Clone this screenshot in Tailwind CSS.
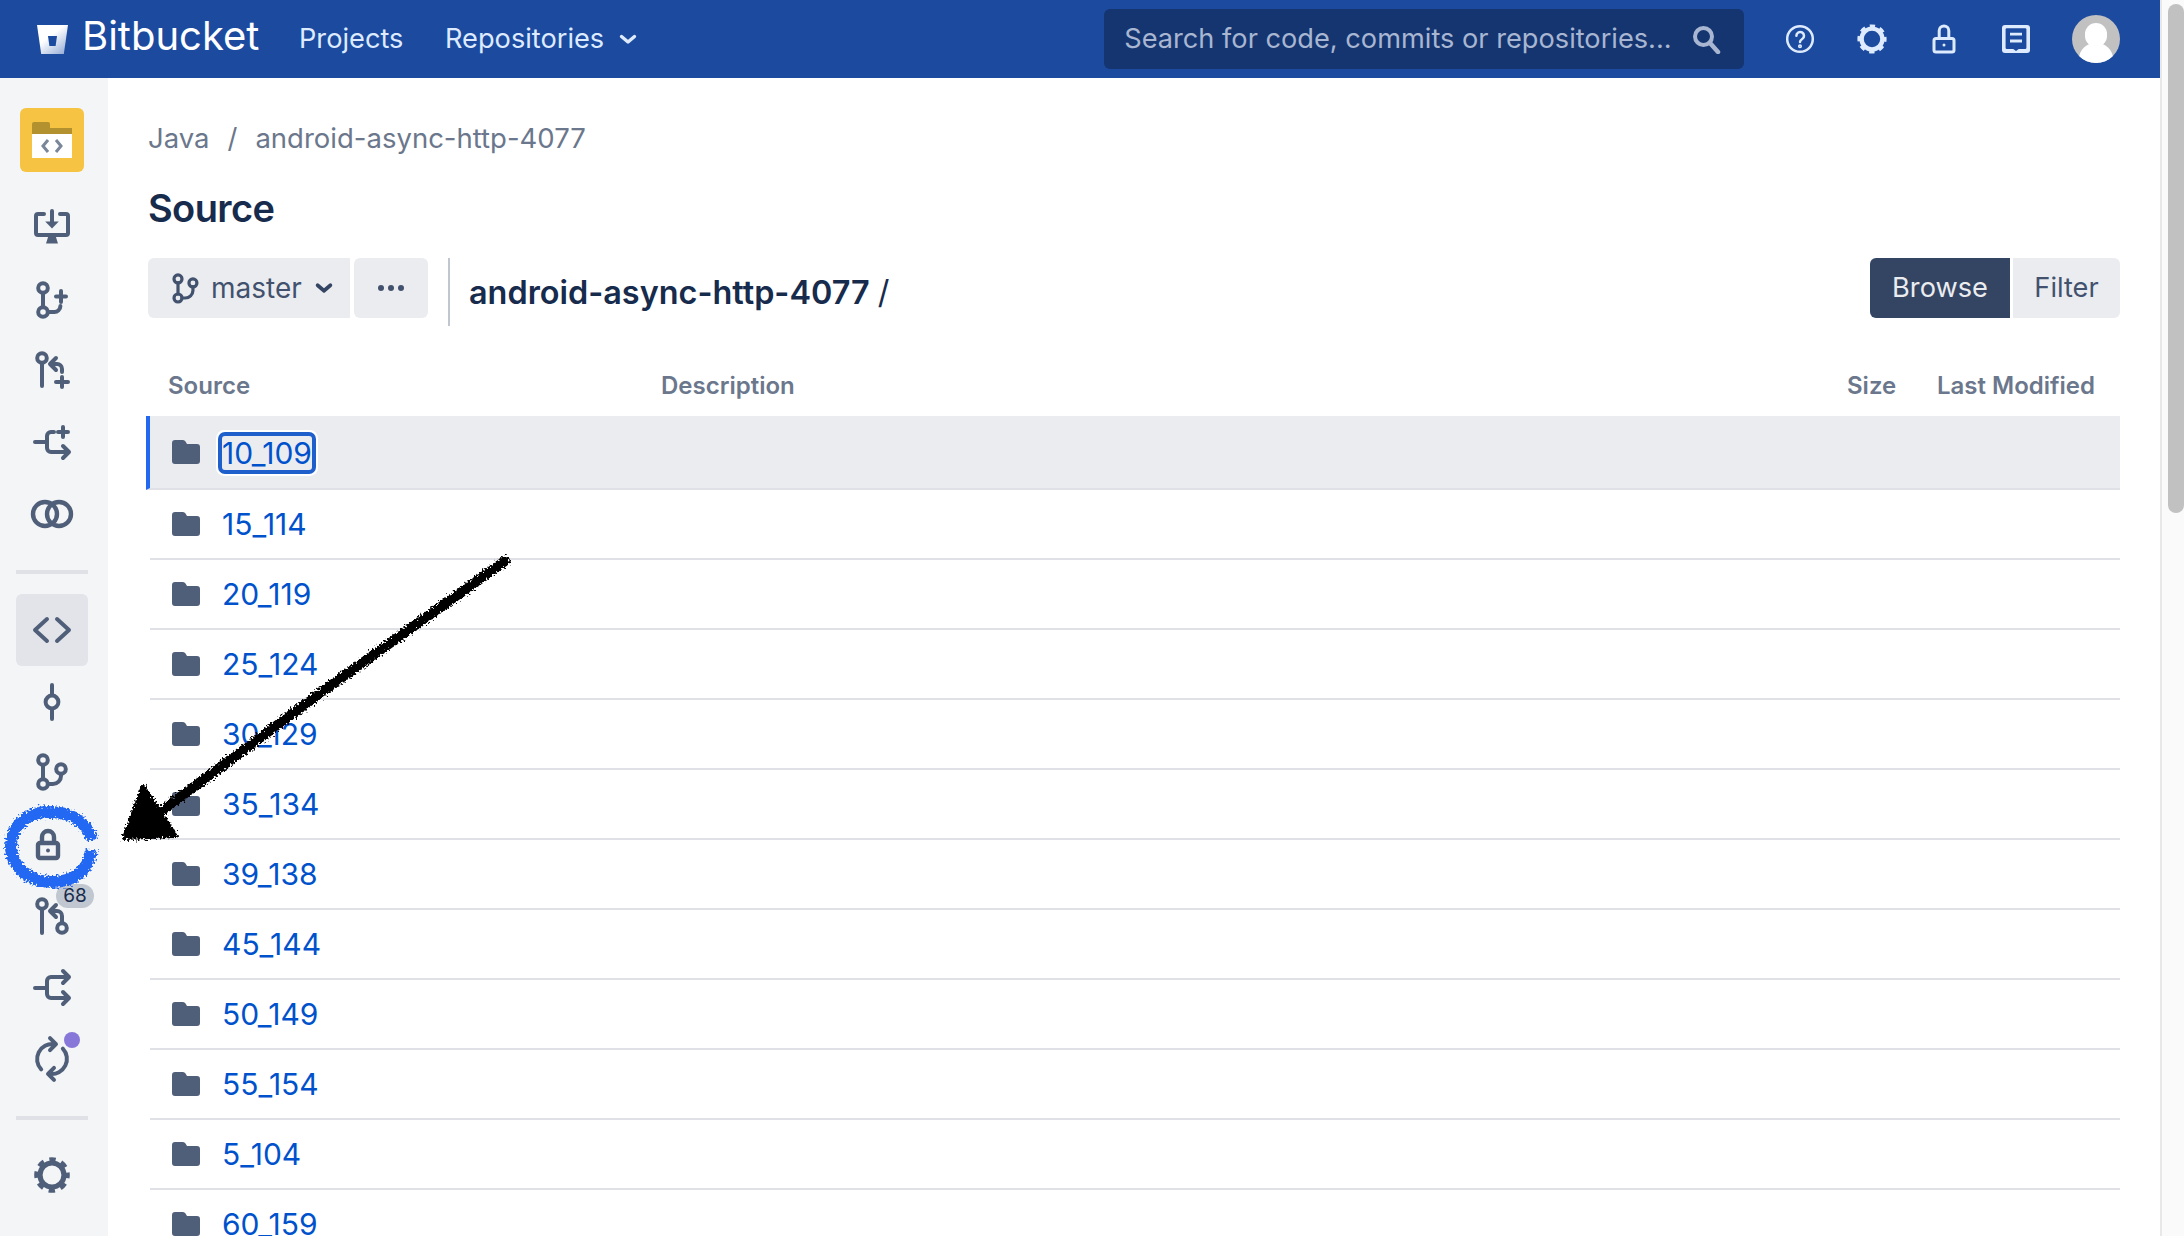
<!DOCTYPE html>
<html lang="en">
<head>
  <meta charset="UTF-8">
  <title>Source - android-async-http-4077</title>
  <script src="https://cdn.jsdelivr.net/npm/@tailwindcss/browser@4"></script>
</head>
<body class="bg-white overflow-hidden [font-family:Inter,sans-serif]">

  <svg class="hidden">
    <symbol id="folder" viewBox="0 0 28 24">
      <path fill="#505f79" d="M3 0h8a3 3 0 0 1 2.5 1.5L15 4h10a3 3 0 0 1 3 3v14a3 3 0 0 1-3 3H3a3 3 0 0 1-3-3V3a3 3 0 0 1 3-3z"/>
    </symbol>
  </svg>

  <div class="relative flex w-[2184px] h-[1236px] overflow-hidden">
    <div class="w-[2160px] flex flex-col">

      <!-- top nav -->
      <header class="h-[78px] shrink-0 bg-[#1b4a9f] flex items-center text-[#deebff] text-[27.2px]">
        <svg class="ml-[37px] w-[31px] h-[29px]" viewBox="0 0 31 29">
          <defs>
            <linearGradient id="bucket" x1="0.15" y1="0.1" x2="0.85" y2="0.95">
              <stop offset="0.35" stop-color="#ffffff"/>
              <stop offset="1" stop-color="#9fb4da"/>
            </linearGradient>
          </defs>
          <path fill="url(#bucket)" d="M0 0h31l-4.2 29H4.2z"/>
          <path fill="#1b4a9f" d="M11 11h9l-1.4 10h-6.2z"/>
        </svg>
        <span class="ml-[14px] w-[217px] text-[40px] leading-none text-white -mt-[7px]">Bitbucket</span>
        <span class="w-[146px]">Projects</span>
        <span>Repositories</span>
        <svg class="ml-[12px] w-[24px] h-[24px]" viewBox="0 0 24 24" fill="none" stroke="#deebff" stroke-width="3.4" stroke-linecap="round" stroke-linejoin="round"><path d="M5.5 9.5 12 15l6.5-5.5"/></svg>

        <div class="ml-[464px] w-[640px] h-[60px] rounded-[6px] bg-[#153570] flex items-center pl-[20px] text-[#a8b6d2]">
          <span class="w-[567px] whitespace-nowrap">Search for code, commits or repositories...</span>
          <svg class="w-[30px] h-[30px]" viewBox="0 0 30 30" fill="none" stroke="#a8b6d2"><circle cx="12.5" cy="12.5" r="8.5" stroke-width="4"/><path d="m19 19 8 9" stroke-width="4.5" stroke-linecap="round"/></svg>
        </div>

        <svg class="ml-[32px] w-[48px] h-[48px]" viewBox="0 0 24 24" fill="none" stroke="#deebff" stroke-width="1.25" stroke-linecap="round"><circle cx="12" cy="12" r="6.4"/><path d="M10.2 10.4a1.9 1.9 0 1 1 2.9 1.6c-.8.5-1.1.9-1.1 1.5"/><circle cx="12" cy="15.6" r=".4"/></svg>
        <svg class="ml-[24px] w-[48px] h-[48px]" viewBox="0 0 24 24" fill="none" stroke="#deebff"><circle cx="12" cy="12" r="5.2" stroke-width="2.2"/><circle cx="12" cy="12" r="6.4" stroke-width="1.8" stroke-dasharray="2.6 2.43" stroke-dashoffset="1.3"/></svg>
        <svg class="ml-[24px] w-[48px] h-[48px]" viewBox="0 0 24 24" fill="none" stroke="#deebff" stroke-width="1.5"><rect x="7" y="11.7" width="10" height="6.8" rx="1"/><path d="M9.6 11.5V7.9a2.4 2.4 0 0 1 4.8 0v3.6"/><circle cx="12" cy="15" r=".75" fill="#deebff" stroke="none"/></svg>
        <svg class="ml-[24px] w-[48px] h-[48px]" viewBox="0 0 24 24"><rect x="5" y="5" width="14" height="14" rx="1.5" fill="#deebff"/><rect x="6.8" y="6.6" width="10.4" height="10.4" rx=".6" fill="#1b4a9f"/><path d="M9 9.6h6M9 13h6" stroke="#deebff" stroke-width="1.4"/><path d="M10.6 17h2.8L12 18z" fill="#1b4a9f"/></svg>

        <div class="relative ml-[32px] w-[48px] h-[48px] rounded-full bg-[#c1c1c1] overflow-hidden">
          <div class="absolute left-[13px] top-[8px] w-[22px] h-[24px] rounded-full bg-white"></div>
          <div class="absolute left-[7px] top-[28px] w-[34px] h-[30px] rounded-t-[16px] bg-white"></div>
        </div>
      </header>

      <div class="flex flex-1 min-h-0">
        <!-- project / repo sidebar -->
        <aside class="w-[108px] shrink-0 bg-[#f4f5f7] flex flex-col items-center pt-[30px] pr-[4px]">
          <div class="w-[64px] h-[64px] rounded-[6px] bg-[#f6c343] flex items-center justify-center">
            <svg class="w-[40px] h-[36px]" viewBox="0 0 40 36">
              <path fill="#b3912f" d="M0 2a2 2 0 0 1 2-2h14a2 2 0 0 1 2 2v4h22v6H0z"/>
              <rect y="12" width="40" height="24" fill="#fff"/>
              <path d="M16 18l-5 6 5 6M24 18l5 6-5 6" fill="none" stroke="#7a869a" stroke-width="3"/>
            </svg>
          </div>

          <div class="mt-[20px] h-[72px] flex items-center justify-center">
            <svg class="w-[48px] h-[48px]" viewBox="0 0 24 24" fill="none" stroke="#505f79" stroke-width="2" stroke-linecap="round" stroke-linejoin="round"><path d="M8 5H5a1 1 0 0 0-1 1v8.5a1 1 0 0 0 1 1h14a1 1 0 0 0 1-1V6a1 1 0 0 0-1-1h-3"/><path d="M12 3.5V9"/><path d="M8.6 8.8h6.800L12 12.2z" fill="#505f79" stroke="none"/><path d="M10.2 16h3.6l1.2 3.7H9z" fill="#505f79" stroke="none"/></svg>
          </div>
          <div class="h-[72px] flex items-center justify-center">
            <svg class="w-[48px] h-[48px]" viewBox="0 0 24 24" fill="none" stroke="#505f79" stroke-width="2" stroke-linecap="round"><circle cx="7.5" cy="6" r="2.4"/><circle cx="7.5" cy="18" r="2.4"/><path d="M7.5 8.5v7M10 18h3a3 3 0 0 0 3.2-3M16.5 7.5V13M14 10.200h5"/></svg>
          </div>
          <div class="h-[72px] flex items-center justify-center">
            <svg class="w-[48px] h-[48px]" viewBox="0 0 24 24" fill="none" stroke="#505f79" stroke-width="2" stroke-linecap="round" stroke-linejoin="round"><circle cx="7" cy="5" r="2.4"/><path d="M7 7.500V19M17 12v-1.500a2.500 2.500 0 0 0-2.500-2.500H12M14 5 11 8l3 3M17 14.500v5M14 17h6"/></svg>
          </div>
          <div class="h-[72px] flex items-center justify-center">
            <svg class="w-[48px] h-[48px] -mt-[4px]" viewBox="0 0 24 24" fill="none" stroke="#505f79" stroke-width="2" stroke-linecap="round" stroke-linejoin="round"><path d="M3.500 12h6M13 7h-1.500a2 2 0 0 0-2 2v6a2 2 0 0 0 2 2H20M17.500 14l3 3-3 3M17.500 4.500v5M15 7h5"/></svg>
          </div>
          <div class="h-[72px] flex items-center justify-center">
            <svg class="w-[48px] h-[48px]" viewBox="0 0 24 24" fill="none" stroke="#505f79" stroke-width="2.2"><circle cx="8.5" cy="11" r="6"/><circle cx="15.5" cy="11" r="6"/></svg>
          </div>

          <div class="mt-[18px] w-[72px] h-[4px] bg-[#dfe1e6]"></div>

          <div class="mt-[20px] w-[72px] h-[72px] rounded-[6px] bg-[#e2e4e9] flex items-center justify-center">
            <svg class="w-[48px] h-[48px]" viewBox="0 0 24 24" fill="none" stroke="#505f79" stroke-width="2" stroke-linecap="round" stroke-linejoin="round"><path d="M9.500 6.500 3.500 12l6 5.500M14.500 6.500l6 5.500-6 5.500"/></svg>
          </div>
          <div class="h-[72px] flex items-center justify-center">
            <svg class="w-[48px] h-[48px]" viewBox="0 0 24 24" fill="none" stroke="#505f79" stroke-width="2" stroke-linecap="round"><circle cx="12" cy="12" r="3.2"/><path d="M12 3.500v5M12 15.500v5"/></svg>
          </div>
          <div class="h-[72px] flex items-center justify-center">
            <svg class="w-[48px] h-[48px] -mt-[4px]" viewBox="0 0 24 24" fill="none" stroke="#505f79" stroke-width="2" stroke-linecap="round"><circle cx="7.5" cy="6" r="2.4"/><circle cx="7.5" cy="18" r="2.4"/><circle cx="16.5" cy="10.5" r="2.4"/><path d="M7.500 8.500v7M10 18h2.500a4 4 0 0 0 4-4v-1"/></svg>
          </div>
          <div class="h-[72px] w-full flex items-center justify-center">
            <svg class="w-[48px] h-[48px] -ml-[8px] -mt-[4px]" viewBox="0 0 24 24" fill="none" stroke="#505f79" stroke-width="2.2" stroke-linejoin="round"><rect x="7" y="11.5" width="10" height="7.5" rx="1"/><path d="M9 11V8.500a3 3 0 0 1 6 0V11"/><circle cx="12" cy="15.200" r="1" fill="#505f79" stroke="none"/></svg>
          </div>
          <div class="relative h-[72px] w-full flex items-center justify-center">
            <svg class="w-[48px] h-[48px] -mt-[4px]" viewBox="0 0 24 24" fill="none" stroke="#505f79" stroke-width="2" stroke-linecap="round" stroke-linejoin="round"><circle cx="7" cy="6" r="2.4"/><circle cx="17" cy="18" r="2.4"/><path d="M7 8.500v12M17 15.500V12a2.500 2.500 0 0 0-2.500-2.500H12M14 6.500l-3 3 3 3"/></svg>
            <span class="absolute left-[56px] top-[2px] w-[38px] h-[24px] rounded-full bg-[#c1c7d0] text-[#172b4d] text-[19px] leading-[24px] text-center">68</span>
          </div>
          <div class="h-[72px] flex items-center justify-center">
            <svg class="w-[48px] h-[48px] -mt-[4px]" viewBox="0 0 24 24" fill="none" stroke="#505f79" stroke-width="2" stroke-linecap="round" stroke-linejoin="round"><path d="M3.500 12h6M20 6.500h-8.500a2 2 0 0 0-2 2V15a2 2 0 0 0 2 2H20M17.500 3.500l3 3-3 3M17.500 14l3 3-3 3"/></svg>
          </div>
          <div class="relative h-[72px] w-full flex items-center justify-center">
            <svg class="w-[48px] h-[48px] -mt-[6px]" viewBox="0 0 24 24" fill="none" stroke="#505f79" stroke-width="2" stroke-linecap="round" stroke-linejoin="round"><path d="M13 4.600A7.500 7.500 0 0 0 6.600 17.200M11 1.600l3 3-3 3M11 19.400A7.500 7.500 0 0 0 17.400 6.800M13 16.400l-3 3 3 3"/></svg>
            <span class="absolute left-[64px] top-[6px] w-[16px] h-[16px] rounded-full bg-[#8777d9]"></span>
          </div>

          <div class="mt-[18px] w-[72px] h-[4px] bg-[#dfe1e6]"></div>

          <div class="mt-[20px] h-[72px] flex items-center justify-center">
            <svg class="w-[48px] h-[48px] -mt-[2px]" viewBox="0 0 24 24" fill="none" stroke="#505f79"><circle cx="12" cy="12" r="6" stroke-width="2.6"/><circle cx="12" cy="12" r="7.8" stroke-width="2.2" stroke-dasharray="3.2 2.93" stroke-dashoffset="1.6"/></svg>
          </div>
        </aside>

        <!-- source browser -->
        <main class="flex-1 min-w-0 pl-[40px] pr-[40px]">
          <nav class="mt-[41px] h-[40px] flex items-center text-[27.5px] text-[#6b778c]">
            <span>Java</span>
            <span class="ml-[18px]">/</span>
            <span class="ml-[18px]">android-async-http-4077</span>
          </nav>
          <h1 class="mt-[25px] h-[48px] flex items-center text-[38px] tracking-[-0.6px] font-semibold text-[#172b4d]">Source</h1>

          <div class="mt-[26px] flex items-start">
            <div class="w-[202px] h-[60px] rounded-l-[6px] bg-[#ebecf0] flex items-center pl-[22px] text-[28px] text-[#42526e]">
              <svg class="w-[32px] h-[32px] mr-[9px]" viewBox="0 0 24 24" fill="none" stroke="#42526e" stroke-width="2.4" stroke-linecap="round"><circle cx="6" cy="5.2" r="3"/><circle cx="6" cy="19.500" r="3"/><circle cx="17.200" cy="8.200" r="3"/><path d="M6 8.200v8.300M9 19.500h2.500a5.700 5.700 0 0 0 5.700-5.500v-2.800"/></svg>
              <span>master</span>
              <svg class="ml-[11px] w-[22px] h-[22px]" viewBox="0 0 24 24" fill="none" stroke="#344563" stroke-width="4" stroke-linecap="round" stroke-linejoin="round"><path d="M5 9l7 6 7-6"/></svg>
            </div>
            <div class="ml-[4px] w-[74px] h-[60px] rounded-[6px] bg-[#ebecf0] flex items-center justify-center gap-[4px]">
              <span class="w-[6px] h-[6px] rounded-full bg-[#42526e]"></span>
              <span class="w-[6px] h-[6px] rounded-full bg-[#42526e]"></span>
              <span class="w-[6px] h-[6px] rounded-full bg-[#42526e]"></span>
            </div>
            <div class="ml-[20px] w-[2px] h-[68px] bg-[#c1c7d0]"></div>
            <div class="ml-[19px] h-[70px] flex items-center text-[32.4px] text-[#172b4d] whitespace-nowrap">
              <span class="font-semibold">android-async-http-4077</span>
              <span class="ml-[8px]">/</span>
            </div>
            <div class="ml-auto flex h-[60px] text-[27.2px]">
              <span class="w-[140px] pt-[1px] rounded-l-[6px] bg-[#344563] text-[#ebecf0] flex items-center justify-center">Browse</span>
              <span class="ml-[3px] w-[107px] pt-[1px] rounded-r-[6px] bg-[#ebecf0] text-[#42526e] flex items-center justify-center">Filter</span>
            </div>
          </div>

          <div class="mt-[41px] h-[34px] ml-[20px] flex items-center text-[24px] font-semibold text-[#6b778c]">
            <span class="w-[493px]">Source</span>
            <span class="w-[1186px]">Description</span>
            <span class="w-[90px]">Size</span>
            <span>Last Modified</span>
          </div>

          <div class="mt-[13px] ml-[2px] text-[30px] text-[#0052cc]">
            <div class="-ml-[4px] h-[74px] pl-[22px] bg-[#ebecf0] border-l-4 border-l-[#2468f2] border-b-2 border-b-[#dfe1e6] flex items-center gap-[22px]">
              <svg class="w-[28px] h-[24px]"><use href="#folder"/></svg>
              <span class="mt-[1px] h-[34px] leading-[34px] rounded-[3px] shadow-[0_0_0_4px_#1f5fcc,0_0_0_6px_#ffffff]">10_109</span>
            </div>
            <div class="h-[70px] pl-[22px] border-b-2 border-b-[#dfe1e6] flex items-center gap-[22px]"><svg class="w-[28px] h-[24px]"><use href="#folder"/></svg><span>15_114</span></div>
            <div class="h-[70px] pl-[22px] border-b-2 border-b-[#dfe1e6] flex items-center gap-[22px]"><svg class="w-[28px] h-[24px]"><use href="#folder"/></svg><span>20_119</span></div>
            <div class="h-[70px] pl-[22px] border-b-2 border-b-[#dfe1e6] flex items-center gap-[22px]"><svg class="w-[28px] h-[24px]"><use href="#folder"/></svg><span>25_124</span></div>
            <div class="h-[70px] pl-[22px] border-b-2 border-b-[#dfe1e6] flex items-center gap-[22px]"><svg class="w-[28px] h-[24px]"><use href="#folder"/></svg><span>30_129</span></div>
            <div class="h-[70px] pl-[22px] border-b-2 border-b-[#dfe1e6] flex items-center gap-[22px]"><svg class="w-[28px] h-[24px]"><use href="#folder"/></svg><span>35_134</span></div>
            <div class="h-[70px] pl-[22px] border-b-2 border-b-[#dfe1e6] flex items-center gap-[22px]"><svg class="w-[28px] h-[24px]"><use href="#folder"/></svg><span>39_138</span></div>
            <div class="h-[70px] pl-[22px] border-b-2 border-b-[#dfe1e6] flex items-center gap-[22px]"><svg class="w-[28px] h-[24px]"><use href="#folder"/></svg><span>45_144</span></div>
            <div class="h-[70px] pl-[22px] border-b-2 border-b-[#dfe1e6] flex items-center gap-[22px]"><svg class="w-[28px] h-[24px]"><use href="#folder"/></svg><span>50_149</span></div>
            <div class="h-[70px] pl-[22px] border-b-2 border-b-[#dfe1e6] flex items-center gap-[22px]"><svg class="w-[28px] h-[24px]"><use href="#folder"/></svg><span>55_154</span></div>
            <div class="h-[70px] pl-[22px] border-b-2 border-b-[#dfe1e6] flex items-center gap-[22px]"><svg class="w-[28px] h-[24px]"><use href="#folder"/></svg><span>5_104</span></div>
            <div class="h-[70px] pl-[22px] border-b-2 border-b-[#dfe1e6] flex items-center gap-[22px]"><svg class="w-[28px] h-[24px]"><use href="#folder"/></svg><span>60_159</span></div>
          </div>
        </main>
      </div>
    </div>

    <!-- browser scrollbar -->
    <div class="w-[24px] shrink-0 bg-[#fafafa] border-l-2 border-l-[#e8e8e8] pl-[6px] pt-[4px]">
      <div class="w-[16px] h-[509px] rounded-full bg-[#c1c1c1]"></div>
    </div>

    <!-- hand-drawn annotation on top of the screenshot -->
    <svg class="absolute left-0 top-0 w-[2184px] h-[1236px] pointer-events-none" viewBox="0 0 2184 1236" fill="none">
      <defs>
        <filter id="scratchy" x="-10%" y="-10%" width="120%" height="120%">
          <feTurbulence type="fractalNoise" baseFrequency="0.5" numOctaves="2" seed="4"/>
          <feDisplacementMap in="SourceGraphic" scale="9" xChannelSelector="R" yChannelSelector="G"/>
        </filter>
      </defs>
      <g filter="url(#scratchy)">
        <path d="M505 561 L330 686 L160 812" stroke="#000" stroke-width="10" stroke-linecap="round"/>
        <path d="M143 786 L124 838 L176 836 Z" fill="#000" stroke="#000" stroke-width="4" stroke-linejoin="round"/>
        <path d="M92 840 C86 818 66 812 48 812 C26 812 11 827 11 846 C11 867 29 882 52 882 C73 882 89 871 91 850" stroke="#2468f2" stroke-width="12"/>
      </g>
    </svg>
  </div>

</body>
</html>
